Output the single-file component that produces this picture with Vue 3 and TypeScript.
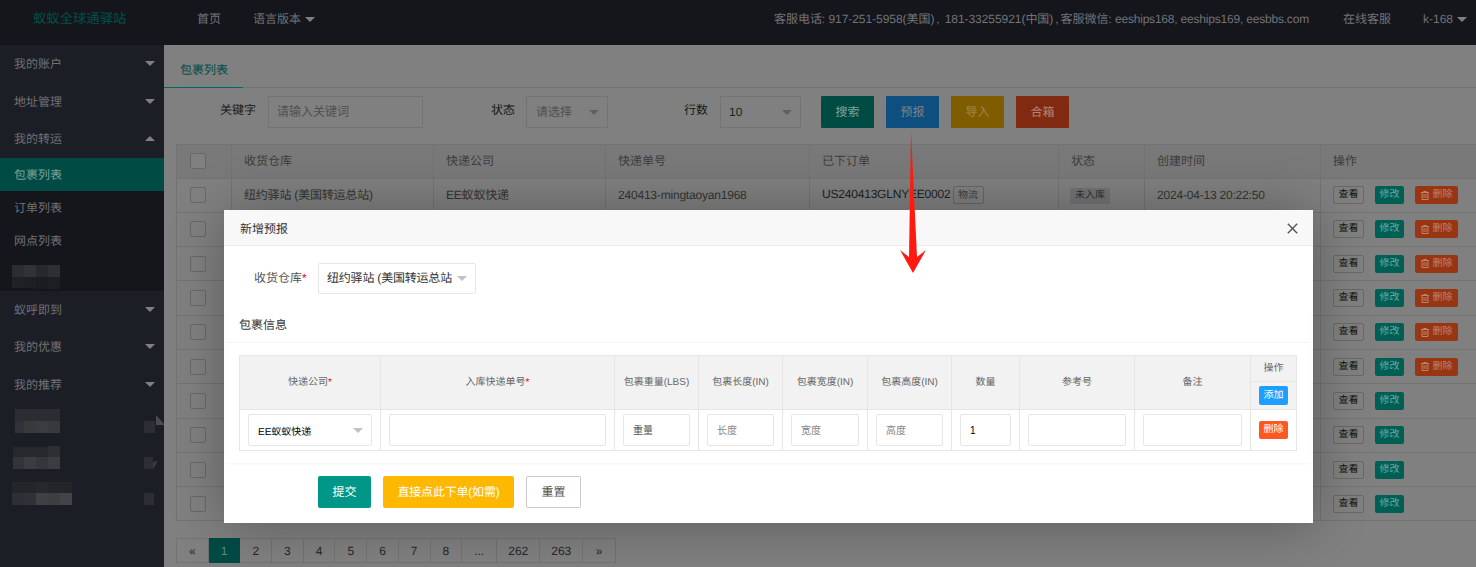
<script setup lang="ts">
interface Row { del: boolean; first: boolean }
const sideTop: string[] = ['我的账户', '地址管理']
const sideBottom: string[] = ['蚁呼即到', '我的优惠', '我的推荐']
const rows: Row[] = Array.from({ length: 10 }, (_, i) => ({ del: i < 6, first: i === 0 }))
const pages: string[] = ['«', '1', '2', '3', '4', '5', '6', '7', '8', '...', '262', '263', '»']
const dimHeads: string[] = ['包裹重量(LBS)', '包裹长度(IN)', '包裹宽度(IN)', '包裹高度(IN)']
const dimInputs: { ph: string; cls: string }[] = [
  { ph: '重量', cls: 'dark-ph' },
  { ph: '长度', cls: '' },
  { ph: '宽度', cls: '' },
  { ph: '高度', cls: '' },
]
</script>

<template>
  <div class="app">
    <header class="topbar">
      <div class="logo">蚁蚁全球通驿站</div>
      <span class="top-link">首页</span>
      <span class="top-link lang">语言版本<i class="caret top-caret"></i></span>
      <span class="contact">客服电话: 917-251-5958(美国)<span class="comma first-comma">,</span>181-33255921(中国)<span class="comma">,</span>客服微信: <span class="latin">eeships168, eeships169, eesbbs.com</span></span>
      <span class="top-link online">在线客服</span>
      <span class="top-link user">k-168<i class="caret top-caret"></i></span>
    </header>

    <div class="shell">
      <aside class="side">
        <div v-for="s in sideTop" :key="s" class="side-item">{{ s }}<i class="caret side-caret"></i></div>
        <div class="side-item">我的转运<i class="caret up side-caret"></i></div>
        <div class="side-child">
          <div class="child active">包裹列表</div>
          <div class="child">订单列表</div>
          <div class="child">网点列表</div>
          <svg class="mosaic-a" width="60" height="34" viewBox="0 0 60 34">
            <rect x="12" y="8" width="12" height="12" fill="#2b2d32" />
            <rect x="24" y="8" width="12" height="12" fill="#303236" />
            <rect x="36" y="8" width="12" height="12" fill="#26282d" />
            <rect x="48" y="8" width="12" height="12" fill="#2d2f33" />
            <rect x="12" y="20" width="12" height="11" fill="#1f2125" />
            <rect x="24" y="20" width="12" height="11" fill="#1c1e22" />
            <rect x="36" y="20" width="12" height="12" fill="#1a1c20" />
            <rect x="48" y="20" width="12" height="12" fill="#1c1e22" />
          </svg>
        </div>
        <div v-for="s in sideBottom" :key="s" class="side-item">{{ s }}<i class="caret side-caret"></i></div>
        <svg class="mosaic-b" width="164" height="110" viewBox="0 403 164 110">
          <rect x="15" y="408" width="45" height="12" fill="#2b2d33" />
          <rect x="15" y="420" width="9" height="12" fill="#30323a" />
          <rect x="24" y="420" width="12" height="12" fill="#37393d" />
          <rect x="36" y="420" width="12" height="12" fill="#3a3c40" />
          <rect x="48" y="420" width="12" height="12" fill="#37393c" />
          <rect x="144" y="420" width="11" height="12" fill="#2c2e33" />
          <polygon points="156,414 165,424 156,424" fill="#4a4c50" />
          <rect x="13" y="446" width="47" height="10" fill="#26282d" />
          <rect x="48" y="445" width="12" height="11" fill="#2d2f33" />
          <rect x="13" y="456" width="11" height="12" fill="#323438" />
          <rect x="24" y="456" width="12" height="12" fill="#3a3c40" />
          <rect x="36" y="456" width="12" height="12" fill="#34363b" />
          <rect x="48" y="456" width="12" height="12" fill="#3a3c40" />
          <rect x="144" y="456" width="9" height="12" fill="#2c2e33" />
          <polygon points="153,461 158,460 153,468" fill="#3a3c40" />
          <rect x="12" y="481" width="60" height="11" fill="#232529" />
          <rect x="36" y="481" width="12" height="11" fill="#26282c" />
          <rect x="12" y="492" width="12" height="12" fill="#2d2f33" />
          <rect x="24" y="492" width="12" height="12" fill="#2f3138" />
          <rect x="36" y="492" width="12" height="12" fill="#3e4044" />
          <rect x="48" y="492" width="12" height="12" fill="#3c3e42" />
          <rect x="60" y="492" width="12" height="12" fill="#424448" />
          <rect x="144" y="492" width="10" height="12" fill="#2c2e33" />
        </svg>
      </aside>

      <main class="main">
        <div class="tabs"><div class="tab">包裹列表</div></div>

        <div class="filters">
          <label class="f-label">关键字</label>
          <input class="f-input" placeholder="请输入关键词" />
          <label class="f-label state">状态</label>
          <div class="f-select state-sel"><span class="ph">请选择</span><i class="caret sel-caret"></i></div>
          <label class="f-label rowsn">行数</label>
          <div class="f-select rows-sel"><span>10</span><i class="caret sel-caret"></i></div>
          <div class="f-btns">
            <span class="f-btn green">搜索</span>
            <span class="f-btn blue">预报</span>
            <span class="f-btn amber">导入</span>
            <span class="f-btn red">合箱</span>
          </div>
        </div>

        <table class="list">
          <colgroup>
            <col style="width: 55px" /><col style="width: 202px" /><col style="width: 172px" /><col style="width: 204px" />
            <col style="width: 249px" /><col style="width: 86px" /><col style="width: 176px" /><col style="width: 156px" />
          </colgroup>
          <thead>
            <tr>
              <th class="chk-cell"><i class="chk"></i></th>
              <th>收货仓库</th><th>快递公司</th><th>快递单号</th><th>已下订单</th><th>状态</th><th>创建时间</th><th>操作</th>
            </tr>
          </thead>
          <tbody>
            <tr v-for="(r, i) in rows" :key="i">
              <td class="chk-cell"><i class="chk"></i></td>
              <td>{{ r.first ? '纽约驿站 (美国转运总站)' : '' }}</td>
              <td>{{ r.first ? 'EE蚁蚁快递' : '' }}</td>
              <td>{{ r.first ? '240413-mingtaoyan1968' : '' }}</td>
              <td>
                <template v-if="r.first"><span class="order">US240413GLNYEE0002</span><span class="track">物流</span></template>
              </td>
              <td class="status-cell"><span v-if="r.first" class="status">未入库</span></td>
              <td>{{ r.first ? '2024-04-13 20:22:50' : '' }}</td>
              <td class="act-cell">
                <span class="act view">查看</span>
                <span class="act edit">修改</span>
                <span v-if="r.del" class="act del">
                  <svg width="8" height="9" viewBox="0 0 8 9" fill="none" stroke="currentColor" stroke-width="1">
                    <path d="M0 1.5h8M2.5 1.5V.5h3v1M1 1.5v7h6v-7M3 3v4M5 3v4" />
                  </svg>
                  删除
                </span>
              </td>
            </tr>
          </tbody>
        </table>

        <nav class="pager">
          <span v-for="(p, i) in pages" :key="i" class="page" :class="{ on: p === '1', long: p.length === 3 && p !== '...' }">{{ p }}</span>
        </nav>
      </main>
    </div>

    <section class="modal">
      <div class="m-title">
        <span class="m-title-text">新增预报</span>
        <svg class="m-close" width="11" height="11" viewBox="0 0 11 11" stroke="#555" stroke-width="1.4">
          <path d="M.8.8l9.4 9.4M10.2.8L.8 10.2" />
        </svg>
      </div>

      <div class="m-form">
        <label class="m-label">收货仓库<em>*</em></label>
        <div class="m-select"><span class="wh">纽约驿站 (美国转运总站</span><i class="caret m-caret"></i></div>
      </div>

      <div class="card">
        <div class="card-head">包裹信息</div>
        <div class="card-body">
          <table class="pkg">
            <colgroup>
              <col style="width: 141px" /><col style="width: 234px" /><col style="width: 84px" /><col style="width: 84px" />
              <col style="width: 85px" /><col style="width: 84px" /><col style="width: 68px" /><col style="width: 115px" />
              <col style="width: 116px" /><col style="width: 46px" />
            </colgroup>
            <thead>
              <tr class="h1">
                <th rowspan="2">快递公司<em>*</em></th>
                <th rowspan="2">入库快递单号<em>*</em></th>
                <th v-for="h in dimHeads" :key="h" rowspan="2">{{ h }}</th>
                <th rowspan="2">数量</th>
                <th rowspan="2">参考号</th>
                <th rowspan="2">备注</th>
                <th>操作</th>
              </tr>
              <tr class="h2">
                <th><span class="mini add">添加</span></th>
              </tr>
            </thead>
            <tbody>
              <tr>
                <td><div class="cell-select"><span>EE蚁蚁快递</span><i class="caret m-caret"></i></div></td>
                <td><input class="cell-input" /></td>
                <td v-for="d in dimInputs" :key="d.ph"><input class="cell-input" :class="d.cls" :placeholder="d.ph" /></td>
                <td><input class="cell-input" value="1" /></td>
                <td><input class="cell-input" /></td>
                <td><input class="cell-input" /></td>
                <td class="mini-cell"><span class="mini remove">删除</span></td>
              </tr>
            </tbody>
          </table>
        </div>
      </div>

      <div class="m-actions">
        <span class="m-btn submit">提交</span>
        <span class="m-btn direct">直接点此下单(如需)</span>
        <span class="m-btn reset">重置</span>
      </div>
    </section>

    <svg class="arrow-mark" width="30" height="146" viewBox="898 130 30 146">
      <polygon points="911,131 917,257 926,250 913,273 900,250 909,257" fill="#ff1a10" />
    </svg>
  </div>
</template>

<style>
html, body { margin: 0; padding: 0; background: #808080; }
</style>

<style scoped>
.app {
  position: relative;
  width: 1476px;
  height: 567px;
  overflow: hidden;
  display: flex;
  flex-direction: column;
  background: #808080;
  font: 12px/1.4 "Liberation Sans", "Noto Sans CJK SC", sans-serif;
  color: #333;
  text-rendering: geometricPrecision;
}
.caret { display: block; width: 0; height: 0; border-style: solid; border-width: 5px 5px 0; border-color: #808080 transparent transparent; }
.caret.up { border-width: 0 5px 5px; border-color: transparent transparent #808080; }

.topbar { flex: none; height: 45px; background: #14161c; display: flex; align-items: center; padding-bottom: 6px; box-sizing: border-box; color: #717378; }
.logo { width: 164px; padding-left: 33px; box-sizing: border-box; margin-right: 33px; font-size: 13.33px; color: #00504a; }
.top-link { display: flex; align-items: center; }
.lang { margin-left: 32px; }
.top-caret { margin-left: 4px; margin-top: 1px; }
.contact { margin-left: auto; letter-spacing: -0.05px; }
.comma { display: inline-block; padding: 0 2px 0 2px; }
.first-comma { padding-right: 5px; }
.latin { letter-spacing: -0.2px; }
.online { margin-left: 34px; }
.user { margin-left: 32px; margin-right: 9px; }

.shell { flex: 1; display: flex; min-height: 0; }
.side { flex: none; width: 164px; background: #1c1e25; color: #6e7075; }
.side-item { position: relative; height: 37.6px; line-height: 39.6px; padding-left: 14px; }
.side-caret { position: absolute; left: 145px; top: 16px; }
.side-child { background: #14161b; }
.child { height: 33px; line-height: 35px; padding-left: 14px; }
.child.active { background: #004b44; color: #78a09a; }
.mosaic-a { display: block; height: 34px; }
.mosaic-b { display: block; }

.main { flex: 1; min-width: 0; overflow: hidden; }
.tabs { height: 42px; border-bottom: 1px solid #737373; box-sizing: content-box; display: flex; }
.tab { width: 79px; height: 43px; line-height: 50px; padding-left: 16px; box-sizing: border-box; border-bottom: 1px solid #00695f; color: #004f47; }

.filters { display: flex; align-items: center; margin-top: 8px; padding-left: 56px; height: 32px; }
.f-label { color: #181818; margin-right: 12px; padding-bottom: 4px; }
.f-label.state { margin-left: 68px; margin-right: 11px; }
.f-label.rowsn { margin-left: 76px; }
.f-input, .f-select { height: 32px; box-sizing: border-box; border: 1px solid #737373; background: transparent; border-radius: 1px; font: inherit; color: #333; padding: 0 0 0 8px; outline: none; }
.f-input { width: 155px; }
.f-input::placeholder { color: #505050; opacity: 1; }
.f-select { display: flex; align-items: center; justify-content: space-between; padding-right: 8px; }
.state-sel { width: 82px; padding-left: 9px; }
.rows-sel { width: 81px; color: #222; }
.ph { color: #505050; }
.sel-caret { border-top-color: #606060; }
.f-btns { display: flex; gap: 12px; margin-left: 20px; }
.f-btn { width: 53px; height: 32px; line-height: 32px; text-align: center; border-radius: 1px; color: #808080; }
.f-btn.green { background: #004b44; color: #7fa39e; }
.f-btn.blue { background: #0f4f80; }
.f-btn.amber { background: #805c00; color: #a08a50; }
.f-btn.red { background: #802b11; color: #b08878; }

.list { width: 1300px; margin-top: 16px; margin-left: 11.5px; border-collapse: collapse; table-layout: fixed; color: #333; }
.list th, .list td { padding: 0 12.5px; box-sizing: border-box; border: 1px solid #737373; font-weight: 400; text-align: left; white-space: nowrap; overflow: hidden; }
.list th { height: 33.5px; background: #797979; color: #3d3d3d; }
.list td { height: 34.3px; letter-spacing: -0.2px; }
.list tr > :last-child { border-right: 0; }
.chk-cell { padding: 0 !important; }
.chk { display: block; width: 14px; height: 14px; margin-left: 13px; border: 1px solid #686868; border-radius: 2px; background: #808080; }
.order { color: #1f1f1f; }
.track { display: inline-block; margin-left: 2px; width: 31px; height: 18px; line-height: 18px; box-sizing: border-box; text-align: center; border: 1px solid #666; border-radius: 2px; font-size: 10px; color: #3a3a3a; vertical-align: middle; letter-spacing: 0; }
.status-cell { padding-left: 11.5px !important; }
.status { display: inline-block; width: 40px; height: 16px; line-height: 16px; text-align: center; background: #737373; font-size: 10px; color: #2f2f2f; border-radius: 2px; letter-spacing: 0; }
.act-cell { font-size: 0; }
.act { display: inline-flex; align-items: center; justify-content: center; height: 18px; font-size: 10px; border-radius: 2px; box-sizing: border-box; vertical-align: middle; letter-spacing: 0; }
.act.view { width: 31px; border: 1px solid #686868; color: #0f0f0f; margin-right: 11px; }
.act.edit { width: 29px; background: #005f55; color: #6fa8a0; margin-right: 11px; }
.act.del { width: 43px; background: #983513; color: #bd8470; gap: 4px; }

.pager { display: flex; margin: 17px 0 0 12px; }
.page { height: 25px; line-height: 25px; padding: 0 12px; box-sizing: border-box; border: 1px solid #737373; border-left: 0; color: #262626; font-size: 12px; text-align: center; }
.page:first-child { border-left: 1px solid #737373; }
.page:last-child { padding: 0 12.5px; }
.page.long { padding: 0 11px; }
.page.on { background: #004b44; color: #5f8f89; border-color: #004b44; }

.modal { position: absolute; left: 224px; top: 210px; width: 1089px; height: 313px; background: #fff; box-shadow: 1px 1px 50px rgba(0, 0, 0, 0.3); }
.m-title { height: 36px; box-sizing: border-box; display: flex; align-items: center; justify-content: space-between; padding: 0 15px 0 16px; background: #f8f8f8; border-bottom: 1px solid #eee; color: #333; }
.m-title-text { padding-top: 3px; }
.m-close { display: block; margin-top: 2px; }
.m-form { display: flex; align-items: center; margin-top: 16px; padding-left: 30px; height: 32px; }
.m-label { width: 64px; color: #555; }
.m-label em, .pkg em { color: #f00; font-style: normal; }
.m-select { width: 158px; height: 31px; box-sizing: border-box; border: 1px solid #e6e6e6; border-radius: 2px; display: flex; align-items: center; justify-content: space-between; padding: 0 8px; color: #333; letter-spacing: -0.2px; }
.wh { white-space: nowrap; }
.m-caret { flex: none; border-top-color: #c2c2c2; }

.card { margin: 14px 3px 0 2px; height: 155px; background: #fff; box-shadow: 0 1px 2px rgba(0, 0, 0, 0.05); box-sizing: border-box; display: flex; flex-direction: column; }
.card-head { flex: none; height: 35px; line-height: 35px; padding-left: 13px; box-sizing: border-box; border-bottom: 1px solid #f6f6f6; color: #333; }
.card-body { padding: 12px 13px; }
.pkg { width: 1058px; border-collapse: collapse; table-layout: fixed; font-size: 10px; color: #666; }
.pkg th, .pkg td { border: 1px solid #e6e6e6; font-weight: 400; padding: 0; text-align: center; box-sizing: border-box; }
.pkg th { background: #f2f2f2; }
.h1 th { height: 26px; }
.h2 th { height: 28px; }
.pkg td { height: 41px; padding: 0 8.5px 0 8px; }
.cell-select, .cell-input { width: 100%; height: 32px; box-sizing: border-box; border: 1px solid #e6e6e6; border-radius: 2px; background: #fff; font: 10px "Liberation Sans", "Noto Sans CJK SC", sans-serif; color: #000; padding: 0 9px; outline: none; display: flex; align-items: center; text-align: left; }
.cell-select { justify-content: space-between; padding-right: 8px; }
.cell-input::placeholder { color: #888; opacity: 1; }
.cell-input.dark-ph::placeholder { color: #555; }
.mini { display: inline-block; width: 29px; line-height: 18px; height: 18px; color: #fff; border-radius: 2px; text-align: center; }
.mini.add { background: #1e9fff; height: 19px; line-height: 19px; }
.mini.remove { background: #ff5722; }
.mini-cell { padding: 0 !important; }

.m-actions { display: flex; gap: 12px; padding-left: 94px; margin-top: 13px; }
.m-btn { height: 32px; line-height: 32px; text-align: center; border-radius: 2px; color: #fff; box-sizing: border-box; }
.submit { width: 53px; background: #009688; }
.direct { width: 131px; background: #ffb800; letter-spacing: -0.2px; }
.reset { width: 55px; line-height: 30px; border: 1px solid #c9c9c9; color: #555; background: #fff; }

.arrow-mark { position: absolute; left: 898px; top: 130px; }
</style>
